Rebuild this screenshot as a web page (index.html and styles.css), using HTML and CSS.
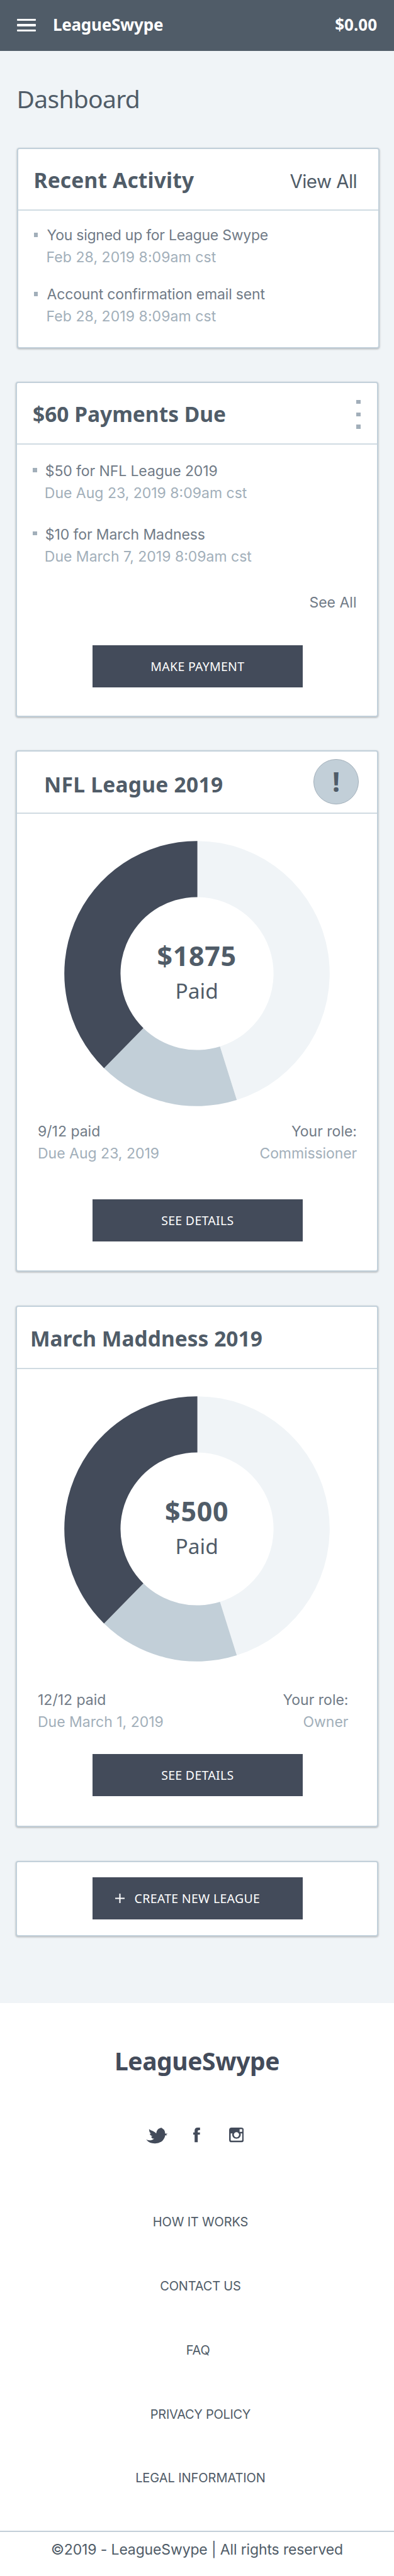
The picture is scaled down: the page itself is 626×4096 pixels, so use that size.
FILE: index.html
```html
<!DOCTYPE html>
<html lang="en">
<head>
<meta charset="utf-8">
<title>LeagueSwype Dashboard</title>
<link rel="stylesheet" href="styles.css">
</head>
<body>
<header class="topbar">
  <div class="menu"><span></span><span></span><span></span></div>
  <div class="brand">LeagueSwype</div>
  <div class="balance">$0.00</div>
</header>

<main class="main">
  <h1 class="page-title">Dashboard</h1>

  <section class="card card-activity">
    <div class="card-head">
      <h2 class="title t-activity">Recent Activity</h2>
      <a class="view-all">View All</a>
    </div>
    <ul class="list">
      <li class="item"><div><p class="line ls-signed">You signed up for League Swype</p><p class="line date">Feb 28, 2019 8:09am cst</p></div></li>
      <li class="item"><div><p class="line ls-account">Account confirmation email sent</p><p class="line date">Feb 28, 2019 8:09am cst</p></div></li>
    </ul>
  </section>

  <section class="card card-payments">
    <div class="card-head">
      <h2 class="title">$60 Payments Due</h2>
      <div class="dots"><span></span><span></span><span></span></div>
    </div>
    <ul class="list">
      <li class="item"><div><p class="line ls-tight">$50 for NFL League 2019</p><p class="line date">Due Aug 23, 2019 8:09am cst</p></div></li>
      <li class="item"><div><p class="line ls-tight">$10 for March Madness</p><p class="line date">Due March 7, 2019 8:09am cst</p></div></li>
    </ul>
    <p class="line see-all">See All</p>
    <a class="button b-pay">MAKE PAYMENT</a>
  </section>

  <section class="card card-nfl">
    <div class="card-head">
      <h2 class="title t-nfl">NFL League 2019</h2>
      <div class="badge">!</div>
    </div>
    <div class="chart">
      <svg class="donut" viewBox="-211 -211 422 422">
        <path class="seg-open" d="M.6-210.8A210.8 210.8 0 0 1 63.2 201.1L36.5 116A121.6 121.6 0 0 0 .6-121.6Z"/>
        <path class="seg-mid" d="M63.2 201.1A210.8 210.8 0 0 1-147.7 150.4L-85.2 86.7A121.6 121.6 0 0 0 36.5 116Z"/>
        <path class="seg-paid" d="M-147.7 150.4A210.8 210.8 0 0 1 .6-210.8V-121.6A121.6 121.6 0 0 0-85.2 86.7Z"/>
      </svg>
      <div class="chart-label"><strong class="amount">$1875</strong><span class="paid">Paid</span></div>
    </div>
    <div class="stats">
      <div><p class="line">9/12 paid</p><p class="line date">Due Aug 23, 2019</p></div>
      <div class="role"><p class="line">Your role:</p><p class="line date ls-comm">Commissioner</p></div>
    </div>
    <a class="button">SEE DETAILS</a>
  </section>

  <section class="card card-march">
    <div class="card-head">
      <h2 class="title t-march">March Maddness 2019</h2>
    </div>
    <div class="chart">
      <svg class="donut" viewBox="-211 -211 422 422">
        <path class="seg-open" d="M.6-210.8A210.8 210.8 0 0 1 63.2 201.1L36.5 116A121.6 121.6 0 0 0 .6-121.6Z"/>
        <path class="seg-mid" d="M63.2 201.1A210.8 210.8 0 0 1-147.7 150.4L-85.2 86.7A121.6 121.6 0 0 0 36.5 116Z"/>
        <path class="seg-paid" d="M-147.7 150.4A210.8 210.8 0 0 1 .6-210.8V-121.6A121.6 121.6 0 0 0-85.2 86.7Z"/>
      </svg>
      <div class="chart-label"><strong class="amount">$500</strong><span class="paid">Paid</span></div>
    </div>
    <div class="stats">
      <div><p class="line">12/12 paid</p><p class="line date">Due March 1, 2019</p></div>
      <div class="role"><p class="line">Your role:</p><p class="line date ls-owner">Owner</p></div>
    </div>
    <a class="button">SEE DETAILS</a>
  </section>

  <section class="card card-create">
    <a class="button b-create">
      <svg class="plus" viewBox="0 0 15 15"><path d="M7.5 0V15M0 7.5H15"/></svg>
      <span>CREATE NEW LEAGUE</span>
    </a>
  </section>
</main>

<footer class="footer">
  <div class="footer-logo">LeagueSwype</div>
  <div class="social">
    <svg class="ic-twitter" viewBox="54.5 77.5 123.5 92">
      <path d="M55 145Q70 154 85 150Q95 148 101 141Q93 142 89 138Q84 134 84 130Q89 130 91 127Q77 123 76 112Q80 113 82 112Q71 103 72 87Q82 94 94 97Q106 102 113 111Q114 99 120 91Q125 83 134 81Q142 77 147 78.500L143 82Q147 80 150 82Q148 84 151 85Q160 88 163 101Q164 106 164 112Q172 113 178 110Q174 115 169 116Q173 118 177 120Q172 123 165 122Q161 143 146 156Q129 169.500 105 169Q71 168 55 145Z"/>
    </svg>
    <svg class="ic-facebook" viewBox="324 78 39 84">
      <path d="M363 78V92H357Q350 92 350 98V106H363L362 119H350V162H332V119H324V106H332V96Q332 78 350 78Z"/>
    </svg>
    <svg class="ic-instagram" viewBox="0 0 84 84">
      <path fill-rule="evenodd" d="M14 0H70Q84 0 84 14V70Q84 84 70 84H14Q0 84 0 70V14Q0 0 14 0ZM60 9V24H75V9ZM9 33V70Q9 75 14 75H70Q75 75 75 70V33H65.500A24.500 24.500 0 1 1 18.500 33ZM42 26A15 15 0 1 0 42 56A15 15 0 1 0 42 26Z"/>
    </svg>
  </div>
  <nav class="links">
    <a>HOW IT WORKS</a>
    <a>CONTACT US</a>
    <a class="l-faq">FAQ</a>
    <a class="l-privacy">PRIVACY POLICY</a>
    <a class="l-legal">LEGAL INFORMATION</a>
  </nav>
  <p class="copyright">©2019 - LeagueSwype | All rights reserved</p>
</footer>
</body>
</html>
```
FILE: styles.css
```css
* { box-sizing: border-box; }

body {
  margin: 0;
  width: 626px;
  height: 4096px;
  background: #f0f4f7;
  color: #505c68;
  font-family: Inter, "Liberation Sans", sans-serif;
}

h1, h2, p, ul { margin: 0; padding: 0; }
ul { list-style: none; }

.topbar, .page-title, .title, .button, .badge, .chart-label, .footer-logo {
  font-family: "Noto Sans", "Open Sans", sans-serif;
}

/* Top bar */
.topbar {
  height: 81px;
  padding: 0 26px 4px 26.7px;
  display: flex;
  align-items: center;
  background: #505c68;
  color: #fff;
  font-size: 26px;
  font-weight: 700;
  line-height: 36px;
}
.menu {
  width: 30px;
  margin: 3px 27.2px 0 0;
  display: flex;
  flex-direction: column;
  gap: 5px;
}
.menu span { height: 3.4px; border-radius: 1px; background: #fff; }
.brand { letter-spacing: -0.23px; }
.balance { margin-left: auto; padding-right: 1px; }

/* Cards */
.main {
  height: 3104px;
  padding: 51px 25px 0;
}
.page-title {
  margin-left: 1.4px;
  font-size: 39px;
  font-weight: 400;
  line-height: 50px;
  letter-spacing: -0.68px;
}
.card {
  width: 576px;
  background: #fff;
  border: 2px solid #c2d0da;
  border-radius: 4px;
  box-shadow: 0 1px 3px rgba(0, 0, 0, 0.3);
}
.card-activity { height: 319px; margin: 53px 0 0 1.5px; }
.card-payments { height: 533px; margin-top: 53px; }
.card-nfl { height: 829px; margin-top: 53px; }
.card-march { height: 829px; margin-top: 54px; }
.card-create { height: 120px; margin-top: 54px; padding-top: 24px; }

.card-head {
  height: 98px;
  padding: 24.7px 26.5px 0 25px;
  display: flex;
  align-items: flex-start;
  justify-content: space-between;
  border-bottom: 2px solid #d0dbe2;
}
.card-nfl .card-head { height: 99px; padding: 27.8px 29px 0 43px; }
.card-march .card-head { height: 99px; padding: 25.7px 20px 0 21px; }

.title { font-size: 33.5px; font-weight: 700; line-height: 48px; }
.t-activity { letter-spacing: 0.18px; }
.t-nfl { letter-spacing: 0.28px; }
.t-march { letter-spacing: 0.02px; }
.view-all {
  margin: 2.3px 7px 0 0;
  font-size: 29.5px;
  line-height: 48px;
  letter-spacing: -0.6px;
}
.dots { margin-top: 2px; display: flex; flex-direction: column; gap: 13.1px; }
.dots span { width: 6.8px; height: 6.8px; background: #a2afba; }
.badge {
  width: 72px;
  height: 72px;
  margin-top: -15.8px;
  border: 1.7px solid #a2afba;
  border-radius: 50%;
  background: #c2cfd8;
  font-size: 43px;
  font-weight: 700;
  line-height: 69px;
  text-align: center;
}

/* Lists */
.line { font-size: 23px; line-height: 35px; color: #717b87; }
.date { color: #a2afba; }
.ls-signed { letter-spacing: -0.26px; }
.ls-account { letter-spacing: -0.17px; }
.ls-tight { letter-spacing: -0.1px; }
.ls-comm { letter-spacing: -0.1px; }
.ls-owner { letter-spacing: 0; }
.list {
  padding: 22.2px 0 0 25px;
  display: flex;
  flex-direction: column;
  gap: 23.5px;
}
.item { display: flex; gap: 14.3px; }
.item::before {
  content: "";
  width: 6.8px;
  height: 6.8px;
  margin-top: 13.2px;
  background: #a2afba;
}
.card-activity .date { margin-left: -1px; letter-spacing: 0.07px; }
.card-payments .list { padding-top: 25px; gap: 30.6px; }
.card-payments .item { gap: 13px; }
.card-payments .item::before { margin-top: 12px; }
.card-payments .date { margin-left: -1px; }
.see-all { margin: 38.3px 32.5px 0 0; text-align: right; }

.button {
  width: 333.7px;
  height: 67px;
  margin-left: 120px;
  display: flex;
  align-items: center;
  justify-content: center;
  background: #434b5a;
  color: #fff;
  font-size: 19.5px;
  letter-spacing: 0.3px;
}
.b-pay { margin-top: 50.2px; }
.b-create {
  padding-left: 35.8px;
  justify-content: flex-start;
  gap: 15.8px;
}
.plus { width: 15px; height: 15px; fill: none; stroke: #fff; stroke-width: 2; }

/* Donut charts */
.chart { width: 422px; height: 422px; margin: 42.5px 0 0 75.2px; display: grid; }
.donut, .chart-label { grid-area: 1 / 1; }
.donut { width: 422px; height: 422px; }
.seg-open { fill: #f0f4f7; }
.seg-mid { fill: #c2cfd8; }
.seg-paid { fill: #434b5a; }
.chart-label {
  align-self: center;
  display: flex;
  flex-direction: column;
  align-items: center;
  padding-right: 1px;
  line-height: 55.4px;
}
.amount { font-size: 43px; letter-spacing: 0.7px; }
.paid { font-size: 33.5px; }
.stats {
  margin: 23.3px 0 55.2px;
  padding: 0 32px 0 33px;
  display: flex;
  justify-content: space-between;
}
.role { text-align: right; }
.card-march .stats { margin: 44.8px 0 33.2px; padding-right: 45.5px; }

/* Footer */
.footer {
  height: 911px;
  padding-top: 66.7px;
  display: flex;
  flex-direction: column;
  align-items: center;
  background: #fff;
}
.footer-logo {
  color: #434b5a;
  font-size: 39px;
  font-weight: 700;
  line-height: 50px;
  letter-spacing: -0.42px;
}
.social {
  width: 155px;
  margin: 81.8px 6.4px 0 0;
  display: flex;
  align-items: flex-start;
  fill: #434b5a;
}
.ic-twitter { width: 34.2px; height: 25.4px; }
.ic-facebook { width: 10.8px; height: 23.3px; margin: 0 45.9px 0 40.7px; }
.ic-instagram { width: 23.4px; height: 23.3px; }
.links {
  margin-top: 109.6px;
  padding-left: 11px;
  display: flex;
  flex-direction: column;
  align-items: center;
  gap: 71.7px;
  font-size: 20px;
  line-height: 30px;
  letter-spacing: -0.17px;
}
.l-faq { margin-right: 7.5px; }
.l-privacy { letter-spacing: -0.29px; }
.l-legal { letter-spacing: -0.06px; }
.copyright {
  width: 100%;
  height: 72px;
  margin-top: auto;
  padding-top: 11px;
  border-top: 2px solid #c2cfd8;
  text-align: center;
  font-size: 23px;
  line-height: 35px;
  letter-spacing: -0.14px;
}
```
